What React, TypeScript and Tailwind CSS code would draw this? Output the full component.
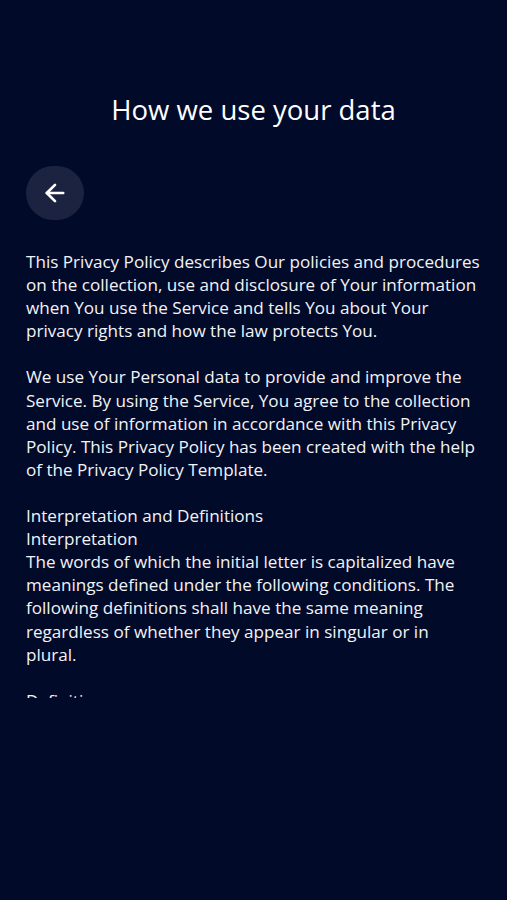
import { ArrowLeft } from 'lucide-react';

const paragraphs = [
    'This Privacy Policy describes Our policies and procedures on the collection, use and disclosure of Your information when You use the Service and tells You about Your privacy rights and how the law protects You.',
    'We use Your Personal data to provide and improve the Service. By using the Service, You agree to the collection and use of information in accordance with this Privacy Policy. This Privacy Policy has been created with the help of the Privacy Policy Template.',
];

export default function App() {
    return (
        <div className="min-h-[900px] w-full bg-[#020a2a] text-white" style={{ fontFamily: '"Open Sans", sans-serif' }}>
            {/* Header */}
            <div className="h-[220px] flex flex-col">
                <h1 className="pt-[91px] text-center text-[27.5px] leading-[38px] font-normal">How we use your data</h1>
                <button className="mt-[37px] ml-[26px] w-[58px] h-[58px] rounded-full bg-[#1c2340] flex items-center justify-center">
                    <ArrowLeft className="w-[28px] h-[28px] text-white" strokeWidth={2.3} />
                </button>
            </div>

            {/* Content */}
            <div className="mt-[30px] h-[448px] overflow-hidden pl-[26px] pr-[25px] text-[17.1px] leading-[23.1px] text-[#f2f3f6]">
                {paragraphs.map((p, i) => (
                    <p key={i} className="mb-[23.1px]">{p}</p>
                ))}
                <p>Interpretation and Definitions</p>
                <p>Interpretation</p>
                <p className="mb-[23.1px]">
                    The words of which the initial letter is capitalized have meanings defined under the following conditions. The following definitions shall have the same meaning regardless of whether they appear in singular or in plural.
                </p>
                <p>Definitions</p>
                <p>For the purposes of this Privacy Policy:</p>
            </div>
        </div>
    );
}
